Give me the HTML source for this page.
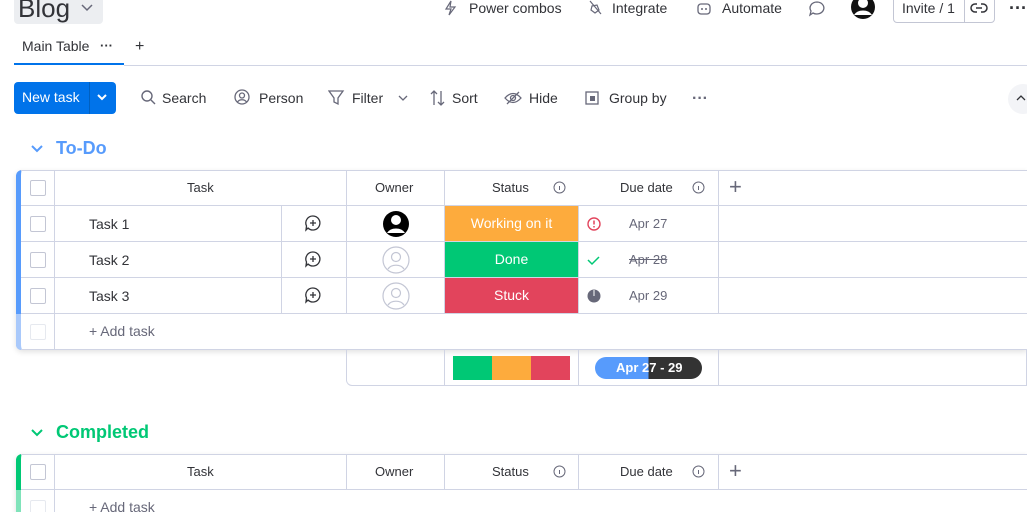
<!DOCTYPE html><html><head><style>
*{box-sizing:border-box;margin:0;padding:0}
html,body{width:1027px;height:512px;overflow:hidden}
body{background:#fff;font-family:"Liberation Sans",sans-serif;color:#323338;position:relative;font-size:14px}
.a{position:absolute}
.t{position:absolute;white-space:nowrap}
.hl{position:absolute;height:1px;background:#d0d4e4}
.vl{position:absolute;width:1px;background:#d0d4e4}
.cb{position:absolute;width:16px;height:16px;border:1px solid #c3c6d4;border-radius:2px;background:#fff}
.st{position:absolute;color:#fff;text-align:center;font-size:14px;line-height:35px}
</style></head><body>
<div class="a" style="left:14px;top:0;width:89px;height:24px;background:#eceef1;border-radius:0 0 4px 4px"></div>
<div class="t" style="left:18px;top:-7px;font-size:26px;color:#323338">Blog</div>
<svg class="a" style="left:80px;top:3px" width="14" height="10"><path d="M2 2l5 5 5-5" fill="none" stroke="#676879" stroke-width="1.5"/></svg>
<svg class="a" style="left:443px;top:0" width="14" height="16"><path d="M8 1L3 9h5l-2 6 6-8H7z" fill="none" stroke="#676879" stroke-width="1.2"/></svg>
<div class="t" style="left:469px;top:0;color:#323338">Power combos</div>
<svg class="a" style="left:587px;top:0" width="16" height="16"><path d="M3 1l11 13M5 6l5-1 2 5-4 3-4-3z" fill="none" stroke="#676879" stroke-width="1.2"/></svg>
<div class="t" style="left:612px;top:0">Integrate</div>
<svg class="a" style="left:696px;top:0" width="16" height="16"><rect x="2" y="4" width="12" height="10" rx="3" fill="none" stroke="#676879" stroke-width="1.3"/><circle cx="6" cy="9" r="1" fill="#676879"/><circle cx="10" cy="9" r="1" fill="#676879"/></svg>
<div class="t" style="left:722px;top:0">Automate</div>
<svg class="a" style="left:808px;top:0" width="18" height="18"><path d="M9 2a7 6 0 1 1-4 11l-3 2 1-4A7 6 0 0 1 9 2z" fill="none" stroke="#676879" stroke-width="1.3"/></svg>
<svg class="a" style="left:849px;top:-5px" width="28" height="26"><circle cx="14" cy="12" r="12" fill="#111"/><circle cx="14" cy="8" r="5" fill="#fff"/><path d="M5 20a10 8 0 0 1 18 0" fill="#fff"/></svg>
<div class="a" style="left:893px;top:-4px;width:102px;height:27px;border:1px solid #c3c6d4;border-radius:4px"></div>
<div class="vl" style="left:964px;top:-4px;height:27px;background:#c3c6d4"></div>
<div class="t" style="left:902px;top:0">Invite / 1</div>
<svg class="a" style="left:970px;top:1px" width="18" height="14"><path d="M7 3H5a4 4 0 0 0 0 8h2M11 3h2a4 4 0 0 1 0 8h-2M6 7h6" fill="none" stroke="#323338" stroke-width="1.5"/></svg>
<div class="t" style="left:1009px;top:-2px;font-size:18px;font-weight:bold">···</div>

<div class="t" style="left:22px;top:38px;font-size:14px">Main Table</div>
<div class="t" style="left:100px;top:38px;font-size:13px;font-weight:bold">···</div>
<div class="t" style="left:135px;top:38px;font-size:16px">+</div>
<div class="a" style="left:14px;top:63px;width:110px;height:2px;background:#0073ea"></div>
<div class="hl" style="left:124px;top:65px;width:903px"></div>

<div class="a" style="left:14px;top:82px;width:102px;height:32px;background:#0073ea;border-radius:4px"></div>
<div class="a" style="left:89px;top:82px;width:1px;height:32px;background:#0060c0"></div>
<div class="t" style="left:22px;top:89px;color:#fff">New task</div>
<svg class="a" style="left:96px;top:93px" width="12" height="10"><path d="M2 2l4 4 4-4" fill="none" stroke="#fff" stroke-width="2"/></svg>
<svg class="a" style="left:140px;top:89px" width="18" height="18"><circle cx="7" cy="7" r="5" fill="none" stroke="#676879" stroke-width="1.4"/><path d="M11 11l4 4" stroke="#676879" stroke-width="1.4"/></svg>
<div class="t" style="left:162px;top:90px">Search</div>
<svg class="a" style="left:234px;top:89px" width="18" height="18"><circle cx="8" cy="8" r="7" fill="none" stroke="#676879" stroke-width="1.3"/><circle cx="8" cy="6.5" r="2.5" fill="none" stroke="#676879" stroke-width="1.3"/><path d="M3.5 13a5 4 0 0 1 9 0" fill="none" stroke="#676879" stroke-width="1.3"/></svg>
<div class="t" style="left:259px;top:90px">Person</div>
<svg class="a" style="left:328px;top:89px" width="18" height="18"><path d="M1 2h14l-5 7v6l-4-2V9z" fill="none" stroke="#676879" stroke-width="1.3"/></svg>
<div class="t" style="left:352px;top:90px">Filter</div>
<svg class="a" style="left:397px;top:94px" width="12" height="8"><path d="M2 2l4 4 4-4" fill="none" stroke="#676879" stroke-width="1.3"/></svg>
<svg class="a" style="left:429px;top:89px" width="18" height="18"><path d="M5 16V2M2 5l3-3 3 3M12 2v14M9 13l3 3 3-3" fill="none" stroke="#676879" stroke-width="1.3"/></svg>
<div class="t" style="left:452px;top:90px">Sort</div>
<svg class="a" style="left:504px;top:89px" width="18" height="18"><path d="M1 9q8-9 16 0q-8 9-16 0zM3 15L15 3" fill="none" stroke="#676879" stroke-width="1.3"/><circle cx="9" cy="9" r="2.5" fill="none" stroke="#676879" stroke-width="1.3"/></svg>
<div class="t" style="left:529px;top:90px">Hide</div>
<svg class="a" style="left:585px;top:91px" width="14" height="14"><rect x="1" y="1" width="12" height="12" fill="none" stroke="#676879" stroke-width="1.3"/><rect x="5" y="5" width="5" height="5" fill="#676879"/></svg>
<div class="t" style="left:609px;top:90px">Group by</div>
<div class="t" style="left:692px;top:90px;font-size:16px;font-weight:bold;color:#676879">···</div>
<div class="a" style="left:1008px;top:84px;width:30px;height:30px;border-radius:50%;background:#f3f4f7"></div>
<svg class="a" style="left:1016px;top:94px" width="10" height="8"><path d="M1 6l4-4 4 4" fill="none" stroke="#323338" stroke-width="1.3"/></svg>

<svg class="a" style="left:30px;top:143px" width="14" height="12"><path d="M2 3l5 5 5-5" fill="none" stroke="#579bfc" stroke-width="2"/></svg>
<div class="t" style="left:56px;top:138px;font-size:18px;color:#579bfc;font-weight:bold">To-Do</div>

<div class="a" style="left:16px;top:170px;width:1011px;height:180px;box-shadow:0 2px 6px rgba(0,0,0,.12);border-radius:6px 0 0 6px;border-left:5px solid #579bfc"></div>
<div class="a" style="left:16px;top:314px;width:5px;height:36px;background:#a9c9fb;border-radius:0 0 0 6px"></div>
<div class="hl" style="left:21px;top:170px;width:1006px"></div>
<div class="hl" style="left:21px;top:205px;width:1006px"></div>
<div class="hl" style="left:21px;top:241px;width:1006px"></div>
<div class="hl" style="left:21px;top:277px;width:1006px"></div>
<div class="hl" style="left:21px;top:313px;width:1006px"></div>
<div class="hl" style="left:21px;top:349px;width:1006px"></div>
<div class="vl" style="left:54px;top:170px;height:180px"></div>
<div class="vl" style="left:281px;top:205px;height:108px"></div>
<div class="vl" style="left:346px;top:170px;height:143px"></div>
<div class="vl" style="left:444px;top:170px;height:143px"></div>
<div class="vl" style="left:578px;top:205px;height:108px"></div>
<div class="vl" style="left:718px;top:170px;height:143px"></div>
<div class="cb" style="left:30px;top:180px"></div><div class="cb" style="left:30px;top:216px"></div><div class="cb" style="left:30px;top:252px"></div><div class="cb" style="left:30px;top:288px"></div><div class="cb" style="left:30px;top:324px;border-color:#e6e9ef"></div>
<div class="t" style="left:187px;top:180px;font-size:13px">Task</div>
<div class="t" style="left:375px;top:180px;font-size:13px">Owner</div>
<div class="t" style="left:492px;top:180px;font-size:13px">Status</div>
<div class="t" style="left:620px;top:180px;font-size:13px">Due date</div>
<svg class="a" style="left:553px;top:181px" width="13" height="13"><circle cx="6.5" cy="6.5" r="5.5" fill="none" stroke="#676879"/><path d="M6.5 5v4" stroke="#676879"/></svg>
<svg class="a" style="left:692px;top:181px" width="13" height="13"><circle cx="6.5" cy="6.5" r="5.5" fill="none" stroke="#676879"/><path d="M6.5 5v4" stroke="#676879"/></svg>
<div class="t" style="left:729px;top:174px;font-size:22px;color:#676879">+</div>
<div class="t" style="left:89px;top:216px;font-size:14px">Task 1</div>
<div class="t" style="left:89px;top:252px;font-size:14px">Task 2</div>
<div class="t" style="left:89px;top:288px;font-size:14px">Task 3</div>
<svg class="a" style="left:304px;top:214px" width="18" height="90"><g fill="none" stroke="#323338" stroke-width="1.3"><path d="M9 2a7 7 0 1 1-5 12l-2 2 .5-4A7 7 0 0 1 9 2zM9 6v6M6 9h6"/><path transform="translate(0,36)" d="M9 2a7 7 0 1 1-5 12l-2 2 .5-4A7 7 0 0 1 9 2zM9 6v6M6 9h6"/><path transform="translate(0,72)" d="M9 2a7 7 0 1 1-5 12l-2 2 .5-4A7 7 0 0 1 9 2zM9 6v6M6 9h6"/></g></svg>
<svg class="a" style="left:382px;top:210px" width="28" height="28"><circle cx="14" cy="14" r="13" fill="#000"/><circle cx="14" cy="10" r="5" fill="#fff"/><path d="M5 23a10 8 0 0 1 18 0" fill="#fff"/></svg>
<svg class="a" style="left:382px;top:246px" width="28" height="64"><g fill="none" stroke="#c3c6d4" stroke-width="1.2"><circle cx="14" cy="14" r="13"/><circle cx="14" cy="11" r="4.5"/><path d="M6 23a9 7 0 0 1 16 0"/><g transform="translate(0,36)"><circle cx="14" cy="14" r="13"/><circle cx="14" cy="11" r="4.5"/><path d="M6 23a9 7 0 0 1 16 0"/></g></g></svg>
<div class="st" style="left:445px;top:206px;width:133px;height:35px;background:#fdab3d">Working on it</div>
<div class="st" style="left:445px;top:242px;width:133px;height:35px;background:#00c875">Done</div>
<div class="st" style="left:445px;top:278px;width:133px;height:35px;background:#e2445c">Stuck</div>
<svg class="a" style="left:586px;top:216px" width="16" height="90"><circle cx="8" cy="8" r="6" fill="none" stroke="#e2445c" stroke-width="1.4"/><path d="M8 4.5v4M8 10v1.5" stroke="#e2445c" stroke-width="1.5"/><path d="M2 44l4 4 7-7" fill="none" stroke="#00c875" stroke-width="1.5"/><circle cx="8" cy="80" r="6.5" fill="#676879"/><path d="M8 74v6" stroke="#fff"/></svg>
<div class="t" style="left:629px;top:216px;font-size:13px;color:#676879">Apr 27</div>
<div class="t" style="left:629px;top:252px;font-size:13px;color:#676879;text-decoration:line-through">Apr 28</div>
<div class="t" style="left:629px;top:288px;font-size:13px;color:#676879">Apr 29</div>
<div class="t" style="left:89px;top:323px;font-size:14px;color:#676879">+ Add task</div>
<div class="a" style="left:346px;top:350px;width:681px;height:36px;border:1px solid #d0d4e4;border-top:none;border-radius:0 0 0 6px"></div>
<div class="vl" style="left:444px;top:350px;height:36px"></div>
<div class="vl" style="left:578px;top:350px;height:36px"></div>
<div class="vl" style="left:718px;top:350px;height:36px"></div>
<div class="a" style="left:453px;top:356px;width:39px;height:24px;background:#00c875"></div>
<div class="a" style="left:492px;top:356px;width:39px;height:24px;background:#fdab3d"></div>
<div class="a" style="left:531px;top:356px;width:39px;height:24px;background:#e2445c"></div>
<div class="a" style="left:595px;top:357px;width:107px;height:22px;border-radius:11px;background:linear-gradient(90deg,#579bfc 0 50%,#333 50%)"></div>
<div class="t" style="left:616px;top:360px;font-size:13px;color:#fff;font-weight:bold">Apr 27 - 29</div>

<svg class="a" style="left:30px;top:427px" width="14" height="12"><path d="M2 3l5 5 5-5" fill="none" stroke="#00c875" stroke-width="2"/></svg>
<div class="t" style="left:56px;top:422px;font-size:18px;color:#00c875;font-weight:bold">Completed</div>
<div class="a" style="left:16px;top:454px;width:1011px;height:70px;box-shadow:0 2px 6px rgba(0,0,0,.12);border-radius:6px 0 0 0;border-left:5px solid #00c875"></div>
<div class="a" style="left:16px;top:490px;width:5px;height:30px;background:#80e3ba"></div>
<div class="hl" style="left:21px;top:454px;width:1006px"></div>
<div class="hl" style="left:21px;top:489px;width:1006px"></div>
<div class="vl" style="left:54px;top:454px;height:60px"></div>
<div class="vl" style="left:346px;top:454px;height:35px"></div>
<div class="vl" style="left:444px;top:454px;height:35px"></div>
<div class="vl" style="left:578px;top:454px;height:35px"></div>
<div class="vl" style="left:718px;top:454px;height:35px"></div>
<div class="cb" style="left:30px;top:464px"></div><div class="cb" style="left:30px;top:500px;border-color:#e6e9ef"></div>
<div class="t" style="left:187px;top:464px;font-size:13px">Task</div>
<div class="t" style="left:375px;top:464px;font-size:13px">Owner</div>
<div class="t" style="left:492px;top:464px;font-size:13px">Status</div>
<div class="t" style="left:620px;top:464px;font-size:13px">Due date</div>
<svg class="a" style="left:553px;top:465px" width="13" height="13"><circle cx="6.5" cy="6.5" r="5.5" fill="none" stroke="#676879"/><path d="M6.5 5v4" stroke="#676879"/></svg>
<svg class="a" style="left:692px;top:465px" width="13" height="13"><circle cx="6.5" cy="6.5" r="5.5" fill="none" stroke="#676879"/><path d="M6.5 5v4" stroke="#676879"/></svg>
<div class="t" style="left:729px;top:458px;font-size:22px;color:#676879">+</div>
<div class="t" style="left:89px;top:499px;font-size:14px;color:#676879">+ Add task</div>
</body></html>
